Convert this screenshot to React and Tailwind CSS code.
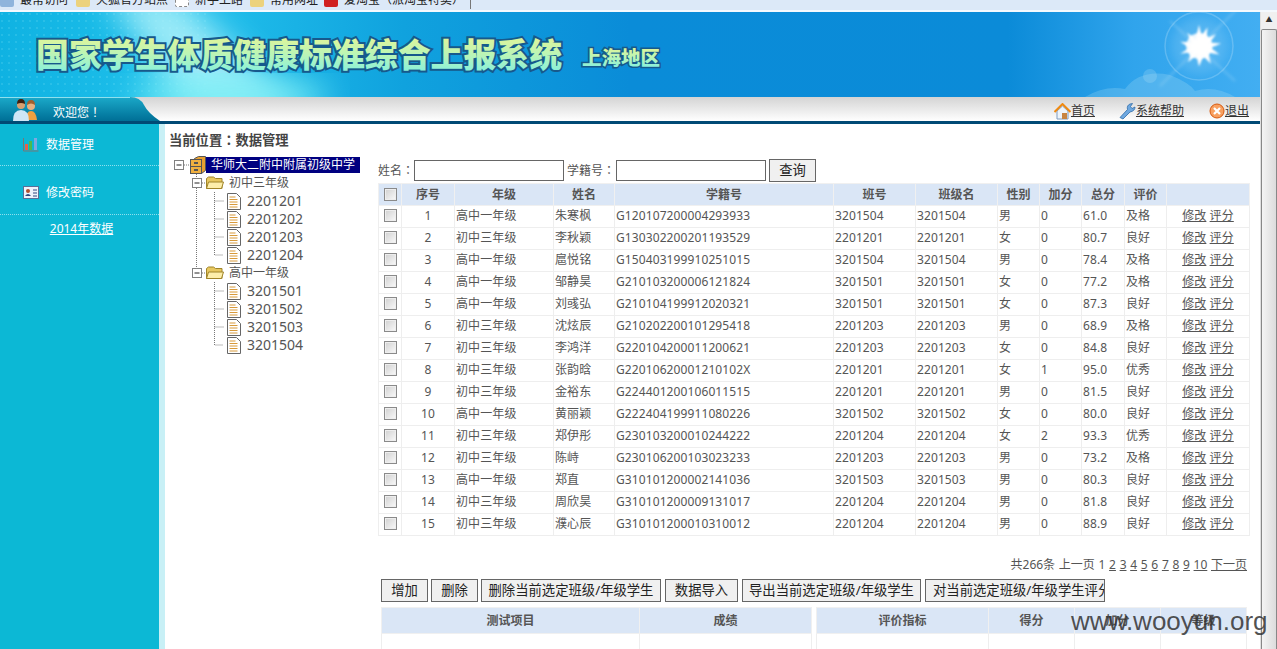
import React from 'react';

const rows = [
  [1, '高中一年级', '朱寒枫', 'G120107200004293933', '3201504', '男', 0, '61.0', '及格'],
  [2, '初中三年级', '李秋颖', 'G130302200201193529', '2201201', '女', 0, '80.7', '良好'],
  [3, '高中一年级', '扈悦铭', 'G150403199910251015', '3201504', '男', 0, '78.4', '及格'],
  [4, '高中一年级', '邹静昊', 'G210103200006121824', '3201501', '女', 0, '77.2', '及格'],
  [5, '高中一年级', '刘彧弘', 'G210104199912020321', '3201501', '女', 0, '87.3', '良好'],
  [6, '初中三年级', '沈炫辰', 'G210202200101295418', '2201203', '男', 0, '68.9', '及格'],
  [7, '初中三年级', '李鸿洋', 'G220104200011200621', '2201203', '女', 0, '84.8', '良好'],
  [8, '初中三年级', '张韵晗', 'G22010620001210102X', '2201201', '女', 1, '95.0', '优秀'],
  [9, '初中三年级', '金裕东', 'G224401200106011515', '2201201', '男', 0, '81.5', '良好'],
  [10, '高中一年级', '黄丽颖', 'G222404199911080226', '3201502', '女', 0, '80.0', '良好'],
  [11, '初中三年级', '郑伊彤', 'G230103200010244222', '2201204', '女', 2, '93.3', '优秀'],
  [12, '初中三年级', '陈峙', 'G230106200103023233', '2201203', '男', 0, '73.2', '及格'],
  [13, '高中一年级', '郑直', 'G310101200002141036', '3201503', '男', 0, '80.3', '良好'],
  [14, '初中三年级', '周欣昊', 'G310101200009131017', '2201204', '男', 0, '81.8', '良好'],
  [15, '初中三年级', '濮心辰', 'G310101200010310012', '2201204', '男', 0, '88.9', '良好'],
];

const colWidths = ['w-[23px]', 'w-[53px]', 'w-[99px]', 'w-[61px]', 'w-[219px]', 'w-[82px]', 'w-[82px]', 'w-[42px]', 'w-[42px]', 'w-[43px]', 'w-[42px]', 'w-[83px]'];
const headers = ['序号', '年级', '姓名', '学籍号', '班号', '班级名', '性别', '加分', '总分', '评价', ''];

const th = 'h-[22px] border border-[#f0f0f0] bg-[#dae6f6] p-0 text-center text-[12px] font-bold text-[#555]';
const td = 'h-[22px] border border-[#eeeeee] px-[1px] pb-[2px] pt-0 text-[12px] tracking-[0.1px] text-[#555]';
const btn = 'h-[23px] shrink-0 overflow-hidden whitespace-nowrap border border-[#666] bg-[#f0f0f0] text-[13.33px] text-[#222]';

const Check = () => (
  <input type="checkbox" className="block mx-auto h-[13px] w-[13px] appearance-none border border-[#8a8a8a] bg-gradient-to-br from-[#d0d0d0] to-[#fafafa] shadow-[inset_0_0_0_1px_#eee]" />
);

// centred full-width punctuation, as the original Windows font draws it
const Punct = ({ children }) => <span className="font-['Noto_Sans_CJK_TC',sans-serif]">{children}</span>;

// tree guide lines and the box, x coordinates are from the tree's left edge
const Dots = ({ d }) => <path d={d} stroke="#777" strokeWidth="1" strokeDasharray="1 1" fill="none" />;
const Box = ({ x }) => (
  <g>
    <rect x={x + 0.5} y="4.5" width="9" height="9" fill="#fff" stroke="#808080" />
    <path d={`M${x + 2.5} 9h5`} stroke="#222" />
  </g>
);
const Cabinet = () => (
  <g>
    <path d="M21.5 2.5l4-2h7v14l-4 3h-7z" fill="#e8a030" stroke="#555" />
    <rect x="17.5" y="3.5" width="11" height="14" fill="#f0b040" stroke="#555" />
    <path d="M18 10.5h10" stroke="#555" />
    <rect x="21" y="6" width="4" height="2" fill="#555" />
    <rect x="21" y="13" width="4" height="2" fill="#555" />
  </g>
);
const Folder = () => (
  <g>
    <path d="M33.5 14.5v-10l2-1.5h5l2 1.5h6.5v10z" fill="#e8c860" stroke="#a08428" />
    <path d="M33.5 14.5l2-6.5h15l-2 6.5z" fill="#fdeeaa" stroke="#a08428" />
  </g>
);
const Doc = () => (
  <g>
    <path d="M54.5 1.5h9l4 4v12h-13z" fill="#fff" stroke="#666" />
    <path d="M56.5 5h6M56.5 7.500h8M56.500 10h8M56.500 12.500h8M56.500 15h8" stroke="#d89a3a" />
  </g>
);

const TreeRow = ({ kind, label, last, second }) => {
  if (kind === 'root') {
    return (
      <div className="flex h-[18px] items-center">
        <svg width="33" height="18" className="shrink-0">
          <Box x={1} />
          <Dots d="M11 9h5" />
          <Cabinet />
        </svg>
        <span className="flex h-[16px] w-[154px] items-center justify-center bg-[#000080] text-[12px] text-white">{label}</span>
      </div>
    );
  }
  if (kind === 'folder') {
    return (
      <div className="flex h-[18px] items-center">
        <svg width="56" height="18" className="shrink-0">
          <Dots d={second ? 'M23.500 0V4' : 'M23.500 0V18'} />
          <Box x={19} />
          <Dots d="M29 9h4" />
          <Folder />
        </svg>
        <span className="text-[12px] text-[#555]">{label}</span>
      </div>
    );
  }
  return (
    <div className="flex h-[18px] items-center">
      <svg width="74" height="18" className="shrink-0">
        {!second && <Dots d="M23.500 0V18" />}
        <Dots d={last ? 'M41.500 0V9h9' : 'M41.500 0V18M41.500 9h9'} />
        <Doc />
      </svg>
      <span className="pb-[2px] text-[14px] text-[#555]">{label}</span>
    </div>
  );
};

const Banner = () => (
  <svg width="1260" height="85" className="block shrink-0">
    <defs>
      <linearGradient id="sky" x1="0" x2="1" y1="0" y2="0">
        <stop offset="0" stopColor="#0fb2e2" />
        <stop offset="0.15" stopColor="#22c2ec" />
        <stop offset="0.32" stopColor="#10a2de" />
        <stop offset="0.5" stopColor="#0a8cd8" />
        <stop offset="0.8" stopColor="#0b8bd8" />
        <stop offset="0.9" stopColor="#30a4ec" />
        <stop offset="1" stopColor="#42aef2" />
      </linearGradient>
      <linearGradient id="titleFill" x1="0" x2="0" y1="0" y2="1">
        <stop offset="0" stopColor="#f2f58c" />
        <stop offset="0.55" stopColor="#b8f5b8" />
        <stop offset="1" stopColor="#78efe8" />
      </linearGradient>
      <pattern id="dots" width="7" height="7" patternUnits="userSpaceOnUse">
        <circle cx="2" cy="2" r="0.7" fill="#bff" opacity="0.35" />
      </pattern>
      <filter id="blur18"><feGaussianBlur stdDeviation="16" /></filter>
      <filter id="blur2"><feGaussianBlur stdDeviation="1.5" /></filter>
      <filter id="blur5"><feGaussianBlur stdDeviation="5" /></filter>
      <clipPath id="bannerClip"><rect width="1260" height="85" /></clipPath>
    </defs>
    <g clipPath="url(#bannerClip)">
      <rect width="1260" height="85" fill="url(#sky)" />
      <rect width="210" height="85" fill="url(#dots)" />
      <path d="M105 -20L175 -20L300 100L190 100Z" fill="#b8f4fb" opacity="0.8" filter="url(#blur18)" />
      <ellipse cx="230" cy="85" rx="100" ry="20" fill="#7ff2f6" opacity="0.85" filter="url(#blur18)" />
      <circle cx="1199" cy="34" r="34" fill="none" stroke="#fff" strokeOpacity="0.2" strokeWidth="1.500" />
      <circle cx="1199" cy="34" r="28" fill="#fff" opacity="0.12" filter="url(#blur5)" />
      <path d="M1160 74L1240 -6M1170 9L1235 69" stroke="#fff" strokeOpacity="0.18" strokeWidth="2" filter="url(#blur2)" />
      <g transform="translate(1199 34) scale(0.85) translate(-1199 -45)">
        <path d="M1199 20l3 13 7-10 -1 13 11-5 -7 10 13 1 -12 5 10 8 -13 -2 3 13 -9 -9 -5 12 -3 -13 -10 8 4 -12 -13 2 11 -7 -11 -7 13 1 -5 -12 10 8z" fill="#fff" filter="url(#blur2)" />
        <circle cx="1199" cy="45" r="15" fill="#fff" opacity="0.9" filter="url(#blur2)" />
      </g>
      <path d="M1085 85q20 -12 40 -8q15 -20 45 -14q20 8 25 16q20 -6 40 6z" fill="#bfe6f8" opacity="0.22" />
      <circle cx="1150" cy="64" r="7" fill="#bfe6f8" opacity="0.22" />
      <g fontFamily="'Noto Sans CJK SC', sans-serif" fontWeight="900" fill="url(#titleFill)" stroke="#17598c" style={{ paintOrder: 'stroke' }}>
        <text x="36" y="55" fontSize="33" strokeWidth="4" textLength="526" lengthAdjust="spacingAndGlyphs">国家学生体质健康标准综合上报系统</text>
        <text x="582" y="53" fontSize="19" strokeWidth="3" textLength="78" lengthAdjust="spacingAndGlyphs">上海地区</text>
      </g>
    </g>
  </svg>
);

const Users = () => (
  <svg width="28" height="24" viewBox="0 0 28 24" className="shrink-0">
    <circle cx="19" cy="8" r="4" fill="#e8b080" />
    <path d="M15 7q0 -5 4 -5t4 5q-4 -3 -8 0z" fill="#a06030" />
    <path d="M14 22q0 -9 5 -9t6 9z" fill="#f0a040" />
    <circle cx="9" cy="7" r="4" fill="#d8a070" />
    <path d="M5 6q0 -5 4 -5t4 5q-4 -2 -8 0z" fill="#402010" />
    <path d="M1 23q0 -11 8 -11t8 11z" fill="#cfe6f6" />
  </svg>
);

const House = () => (
  <svg width="17" height="17" viewBox="0 0 17 17" className="shrink-0">
    <path d="M3 8v8h11v-8l-5.500 -5z" fill="#eef4fa" stroke="#7f9cc0" />
    <path d="M0.500 9L8.500 1l8 8" fill="none" stroke="#f08a10" strokeWidth="2" />
    <rect x="8" y="10" width="5" height="6" fill="#c88440" />
  </svg>
);
const Wrench = () => (
  <svg width="17" height="17" viewBox="0 0 17 17" className="shrink-0">
    <path d="M1 14.500L8.500 6.500q-1 -4 2.500 -5.500l2.500 -0.500 -2 3 1.500 2 3 -1.500q0 4 -5 5l-7 7z" fill="#6ea8e0" stroke="#2f6ca8" strokeWidth="0.8" />
  </svg>
);
const Exit = () => (
  <svg width="16" height="16" viewBox="0 0 16 16" className="shrink-0">
    <circle cx="8" cy="8" r="7" fill="#f8a060" stroke="#d85a10" />
    <path d="M5 5l6 6M11 5l-6 6" stroke="#fff" strokeWidth="2.200" />
  </svg>
);

const Bars = () => (
  <svg width="16" height="15" viewBox="0 0 16 15" className="shrink-0">
    <path d="M0.500 1v13h15" fill="none" stroke="#777" />
    <rect x="2" y="7" width="3" height="6" fill="#e8604a" />
    <rect x="6" y="4" width="3" height="9" fill="#4eb84e" />
    <rect x="11" y="1" width="3" height="12" fill="#7ea8e0" />
  </svg>
);
const Card = () => (
  <svg width="16" height="13" viewBox="0 0 16 13" className="shrink-0">
    <rect x="0.500" y="0.500" width="15" height="12" fill="#eef3fb" stroke="#5a6e98" />
    <circle cx="5" cy="5" r="2" fill="#b05030" />
    <path d="M2 10q3 -4 6 0z" fill="#304880" />
    <path d="M10 4h4M10 7h4M10 10h4" stroke="#304880" />
  </svg>
);

const Bookmark = ({ color, label, w }) => (
  <div className={`flex shrink-0 items-center gap-[6px] ${w}`}>
    <span className={`h-[14px] w-[14px] shrink-0 rounded-[2px] ${color}`} />
    <span className="whitespace-nowrap text-[12px] text-[#222]">{label}</span>
  </div>
);

export default function App() {
  return (
    <div className="relative flex h-screen flex-col overflow-hidden bg-white font-['Noto_Sans','Noto_Sans_CJK_SC',sans-serif]">
      {/* browser bookmarks bar, cut off by the screenshot */}
      <div className="h-[12px] shrink-0 overflow-hidden border-b-2 border-[#f4f9fe] bg-[#dce9f8]">
        <div className="-mt-[9px] flex h-[18px] items-center">
          <Bookmark color="bg-[#8fb4dc]" label="最常访问" w="w-[76px]" />
          <Bookmark color="bg-[#ecd27c]" label="火狐官方站点" w="w-[99px]" />
          <Bookmark color="border border-dashed border-[#888] bg-white" label="新手上路" w="w-[75px]" />
          <Bookmark color="bg-[#ecd27c]" label="常用网址" w="w-[74px]" />
          <Bookmark color="bg-[#d02020]" label="爱淘宝（派淘宝特卖）" w="w-[146px]" />
          <div className="h-[18px] w-px bg-[#777]" />
        </div>
      </div>

      <div className="flex min-h-0 flex-1">
        <div className="flex w-[1260px] shrink-0 flex-col overflow-hidden">
          <Banner />

          <div className="flex h-[27px] shrink-0 border-b-[3px] border-[#004a75] bg-gradient-to-b from-[#d4d4d4] to-white">
            <div className="flex w-[130px] items-center gap-[13px] border-t border-[#8fe0ee] bg-gradient-to-b from-[#1aa8c8] to-[#006f96] pl-[12px]">
              <Users />
              <span className="pt-[5px] text-[12px] text-white">欢迎您<Punct>！</Punct></span>
            </div>
            <svg width="30" height="24" className="shrink-0">
              <defs>
                <linearGradient id="tabFill" x1="0" x2="0" y1="0" y2="1">
                  <stop offset="0" stopColor="#1aa8c8" />
                  <stop offset="1" stopColor="#006f96" />
                </linearGradient>
              </defs>
              <path d="M0 0q10 0 14 8t16 16H0z" fill="url(#tabFill)" />
            </svg>
            <div className="flex flex-1 items-center justify-end pr-[11px] pt-[4px] text-[12px] text-[#333]">
              <a href="#!" className="flex items-center underline"><House />首页</a>
              <a href="#!" className="ml-[24px] flex items-center underline"><Wrench />系统帮助</a>
              <a href="#!" className="ml-[25px] flex items-center underline"><Exit />退出</a>
            </div>
          </div>

          <div className="flex min-h-0 flex-1">
            <aside className="flex w-[165px] shrink-0 flex-col border-r-[6px] border-[#c8f0f6] bg-[#0cb8d5] text-[12px] text-white">
              <div className="flex h-[42px] items-center gap-[7px] border-b border-dotted border-[#8fe0ee] pl-[23px]">
                <Bars />
                <span>数据管理</span>
              </div>
              <div className="mt-[5px] flex h-[44px] items-center gap-[7px] border-b border-dotted border-[#8fe0ee] pl-[23px]">
                <Card />
                <span>修改密码</span>
              </div>
              <a href="#!" className="mt-[5px] pl-[4px] text-center underline">2014年数据</a>
            </aside>

            <main className="flex min-w-0 flex-1 flex-col pl-[4px] pt-[7px]">
              <div className="h-[17px] text-[13.3px] font-bold leading-[17px] text-[#444]">当前位置<Punct>：</Punct>数据管理</div>
              <div className="mt-[8px] flex">
                <div className="w-[209px] shrink-0 pl-[4px]">
                  <TreeRow kind="root" label="华师大二附中附属初级中学" />
                  <TreeRow kind="folder" label="初中三年级" />
                  <TreeRow kind="leaf" label="2201201" />
                  <TreeRow kind="leaf" label="2201202" />
                  <TreeRow kind="leaf" label="2201203" />
                  <TreeRow kind="leaf" label="2201204" last />
                  <TreeRow kind="folder" label="高中一年级" second />
                  <TreeRow kind="leaf" label="3201501" second />
                  <TreeRow kind="leaf" label="3201502" second />
                  <TreeRow kind="leaf" label="3201503" second />
                  <TreeRow kind="leaf" label="3201504" second last />
                </div>

                <div className="w-[872px] shrink-0 pt-[3px]">
                  <div className="mb-px flex h-[23px] items-center whitespace-nowrap text-[12px] text-[#555]">
                    <span className="w-[36px]">姓名<Punct>：</Punct></span>
                    <input className="h-[21px] w-[150px] border border-[#666] bg-white" />
                    <span className="ml-[3px] w-[49px]">学籍号<Punct>：</Punct></span>
                    <input className="h-[21px] w-[150px] border border-[#666] bg-white" />
                    <button className="ml-[3px] h-[23px] w-[47px] border border-[#666] bg-[#f0f0f0] text-[13.33px] text-[#222]">查询</button>
                  </div>

                  <table className="w-[871px] table-fixed border-collapse">
                    <colgroup>
                      {colWidths.map((c, i) => <col key={i} className={c} />)}
                    </colgroup>
                    <thead>
                      <tr>
                        <th className={th}><Check /></th>
                        {headers.map((h, i) => <th key={i} className={th}>{h}</th>)}
                      </tr>
                    </thead>
                    <tbody>
                      {rows.map((r) => (
                        <tr key={r[0]}>
                          <td className={td}><Check /></td>
                          <td className={`${td} text-center`}>{r[0]}</td>
                          <td className={td}>{r[1]}</td>
                          <td className={td}>{r[2]}</td>
                          <td className={td}>{r[3]}</td>
                          <td className={td}>{r[4]}</td>
                          <td className={td}>{r[4]}</td>
                          <td className={td}>{r[5]}</td>
                          <td className={td}>{r[6]}</td>
                          <td className={td}>{r[7]}</td>
                          <td className={td}>{r[8]}</td>
                          <td className={`${td} text-center text-[#444]`}>
                            <a href="#!" className="underline">修改</a> <a href="#!" className="underline">评分</a>
                          </td>
                        </tr>
                      ))}
                    </tbody>
                  </table>

                  <div className="mt-[20px] flex h-[18px] items-center justify-end gap-[3.7px] pr-[3px] text-[12px] text-[#555]">
                    <span>共266条</span>
                    <span>上一页</span>
                    <span>1</span>
                    {[2, 3, 4, 5, 6, 7, 8, 9, 10].map((n) => <a key={n} href="#!" className="underline">{n}</a>)}
                    <a href="#!" className="underline">下一页</a>
                  </div>

                  <div className="ml-[3px] mt-[5px] flex gap-[3px]">
                    <button className={`${btn} w-[47px]`}>增加</button>
                    <button className={`${btn} w-[47px]`}>删除</button>
                    <button className={`${btn} w-[180px]`}>删除当前选定班级/年级学生</button>
                    <button className={`${btn} ml-px w-[73px]`}>数据导入</button>
                    <button className={`${btn} ml-px w-[179px]`}>导出当前选定班级/年级学生</button>
                    <button className={`${btn} ml-px w-[180px] pl-[7px] text-left`}>对当前选定班级/年级学生评分</button>
                  </div>

                  <div className="ml-[3px] mt-[5px] flex gap-[4px]">
                    <table className="w-[430px] table-fixed border-collapse">
                      <colgroup>
                        <col className="w-[258px]" />
                        <col className="w-[172px]" />
                      </colgroup>
                      <thead>
                        <tr>
                          <th className={`${th} h-[26px]`}>测试项目</th>
                          <th className={`${th} h-[26px]`}>成绩</th>
                        </tr>
                      </thead>
                      <tbody>
                        <tr><td className={`${td} h-[26px]`}></td><td className={`${td} h-[26px]`}></td></tr>
                      </tbody>
                    </table>
                    <table className="w-[430px] table-fixed border-collapse">
                      <colgroup>
                        <col className="w-[172px]" />
                        <col className="w-[86px]" />
                        <col className="w-[86px]" />
                        <col className="w-[86px]" />
                      </colgroup>
                      <thead>
                        <tr>
                          <th className={`${th} h-[26px]`}>评价指标</th>
                          <th className={`${th} h-[26px]`}>得分</th>
                          <th className={`${th} h-[26px]`}>加分</th>
                          <th className={`${th} h-[26px]`}>等级</th>
                        </tr>
                      </thead>
                      <tbody>
                        <tr>
                          <td className={`${td} h-[26px]`}></td>
                          <td className={`${td} h-[26px]`}></td>
                          <td className={`${td} h-[26px]`}></td>
                          <td className={`${td} h-[26px]`}></td>
                        </tr>
                      </tbody>
                    </table>
                  </div>
                </div>
              </div>
            </main>
          </div>
        </div>

        {/* window scrollbar */}
        <div className="flex w-[17px] shrink-0 flex-col border-l border-[#e0e0e0] bg-[#f0f0f0]">
          <div className="flex h-[17px] items-center justify-center text-[7px] text-[#333]">▲</div>
          <div className="flex-1 rounded-t-[2px] border border-b-0 border-[#888] bg-gradient-to-r from-[#f4f4f4] to-[#dcdcdc]" />
        </div>
      </div>

      {/* watermark stamped over the screenshot */}
      <div className="pointer-events-none absolute left-[1071px] top-[602px] font-['Liberation_Sans',sans-serif] text-[26px] text-[#333]/85">
        www.wooyun.org
      </div>
    </div>
  );
}
